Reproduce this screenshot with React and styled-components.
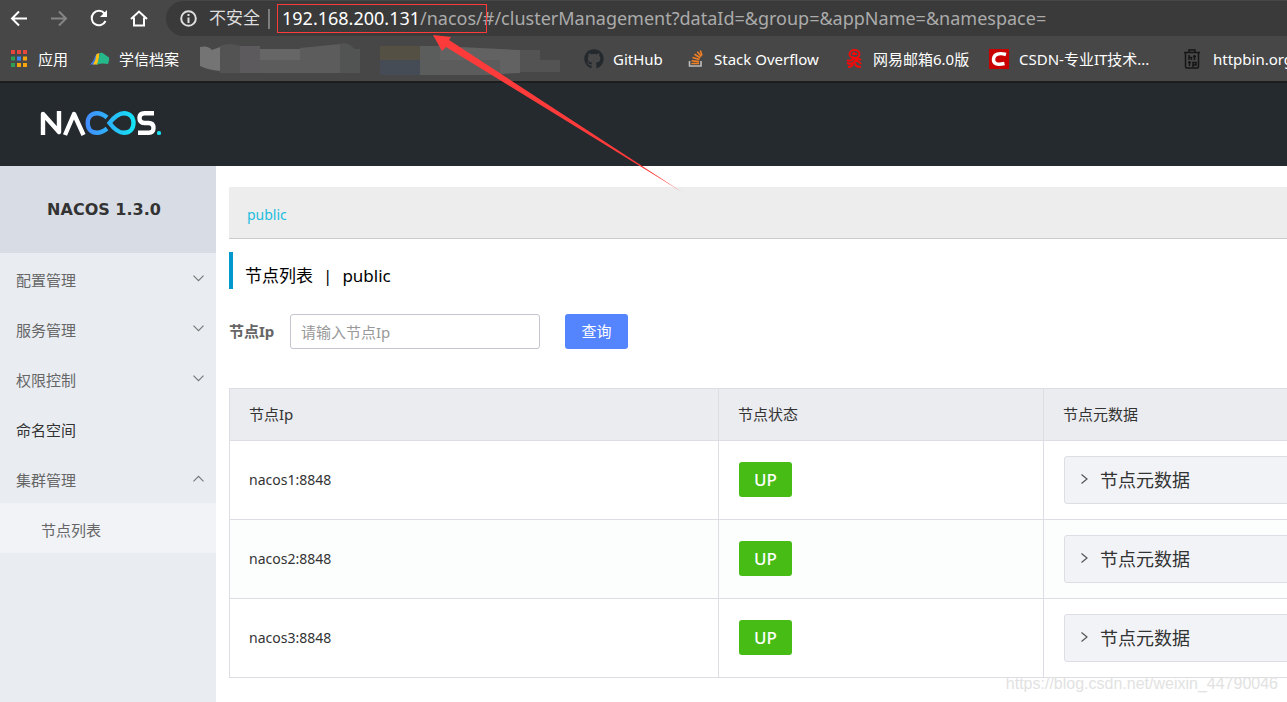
import React from 'react';
import styled, { createGlobalStyle } from 'styled-components';
import { FaGithub } from 'react-icons/fa';

const pageFont = '"Noto Sans", "Noto Sans CJK SC", sans-serif';

const GlobalStyle = createGlobalStyle`
  * { box-sizing: border-box; }
  html, body { margin: 0; overflow: hidden; }
  body { background: #fff; font-family: ${pageFont}; font-size: 14px; color: #333; }
  button, input { font: inherit; }
  a { color: inherit; text-decoration: none; }
`;

const Page = styled.div`
  display: flex;
  flex-direction: column;
  min-height: 100vh;
  position: relative;
`;

const BrowserChrome = styled.header`
  background: #474747;
  border-bottom: 2px solid #1d1d1d;
  overflow: hidden;
`;

const AddressRow = styled.div`
  display: flex;
  align-items: center;
  height: 36px;
  padding-left: 9px;
`;

const NavButton = styled.button`
  display: flex;
  align-items: center;
  width: ${(p) => (p.$last ? 37 : 40)}px;
  height: 36px;
  padding: 0;
  border: 0;
  background: none;
  color: ${(p) => (p.$dim ? '#858585' : '#fff')};
  svg { flex: none; }
`;

const AddressBar = styled.div`
  display: flex;
  align-items: center;
  flex: 1;
  align-self: stretch;
  margin-top: 1px;
  padding-left: 14px;
  border-radius: 18px 0 0 18px;
  background: #3a3a3a;
  color: #ababab;
  font-size: 18px;
  line-height: 28px;
  white-space: nowrap;
`;

const Insecure = styled.span`
  margin-left: 12px;
  padding-bottom: 2px;
  color: #dedede;
  font-size: 17px;
`;

const Divider = styled.span`
  width: 2px;
  height: 20px;
  margin: 0 7px 0 8px;
  background: #7d7d7d;
`;

const MarkedUrl = styled.span`
  position: relative;
  height: 29px;
  padding-left: 5px;
  &::after {
    content: '';
    position: absolute;
    inset: 0 -4px 0 0;
    border: 1px solid #fe3b3b;
  }
  b { font-weight: 400; color: #fff; }
`;

const UrlRest = styled.span`
  height: 29px;
`;

const BookmarkRow = styled.nav`
  display: flex;
  align-items: center;
  height: 45px;
  padding-left: 10px;
  color: #fff;
  font-size: 15px;
  white-space: nowrap;
`;

const Bookmark = styled.a`
  display: flex;
  align-items: center;
  gap: ${(p) => p.$gap || 10}px;
  flex: none;
  width: ${(p) => p.$width}px;
  svg { flex: none; }
`;

const Redacted = styled.svg`
  flex: none;
  margin-right: 24px;
`;

const Banner = styled.div`
  display: flex;
  align-items: center;
  height: 83px;
  padding: 0 0 4px 40px;
  background: #252a2f;
`;

const Body = styled.div`
  display: flex;
  flex: 1;
`;

const Sidebar = styled.aside`
  flex: none;
  width: 216px;
  background: #e9edf2;
`;

const Version = styled.h1`
  margin: 0;
  height: 87px;
  padding-right: 8px;
  background: #d8dce4;
  font-family: "DejaVu Sans", sans-serif;
  font-size: 16px;
  line-height: 87px;
  text-align: center;
`;

const MenuItem = styled.a`
  display: flex;
  align-items: center;
  justify-content: space-between;
  height: 50px;
  padding: 2px 12px 0 ${(p) => (p.$child ? 41 : 16)}px;
  background: ${(p) => (p.$child ? '#f1f3f7' : 'none')};
  color: ${(p) => (p.$leaf ? '#333' : '#666')};
  font-size: 15px;
  svg { margin-bottom: 2px; }
`;

const Main = styled.main`
  flex: 1;
  min-width: 0;
  padding: 21px 0 0 13px;
  overflow: hidden;
`;

const Namespace = styled.div`
  height: 52px;
  padding: 4px 18px 0;
  border-bottom: 1px solid #ccc;
  background: #ededed;
  color: #1cbede;
  font-size: 14px;
  line-height: 48px;
`;

const Title = styled.h2`
  display: flex;
  gap: 10px;
  height: 37px;
  margin: 13px 0 25px;
  padding: 5px 0 0 12px;
  border-left: 4px solid #09c;
  color: #000;
  font-size: 17px;
  font-weight: 400;
  line-height: 37px;
`;

const SearchForm = styled.form`
  display: flex;
  align-items: center;
  height: 35px;
  margin-bottom: 39px;
  font-size: 15px;
  label { width: 61px; padding-bottom: 2px; color: #666; font-weight: 700; }
`;

const IpInput = styled.input`
  width: 250px;
  height: 35px;
  padding: 0 10px;
  border: 1px solid #c4c6cf;
  border-radius: 3px;
  outline: 0;
  &::placeholder { color: #999; opacity: 1; }
`;

const SearchButton = styled.button`
  width: 63px;
  height: 35px;
  margin-left: 25px;
  padding: 0 0 2px;
  border: 0;
  border-radius: 3px;
  background: #5584ff;
  color: #fff;
`;

const NodeTable = styled.table`
  width: 120%;
  table-layout: fixed;
  border-collapse: collapse;
  font-size: 15px;
  th, td { padding: 0 20px 2px 19px; border: 1px solid #dcdee3; text-align: left; }
  th { height: 52px; background: #ebecf0; font-weight: 400; }
  td { height: 79px; }
  td:first-child { font-size: 14px; }
  td + td { padding-left: 20px; }
  td:last-child { padding-bottom: 0; }
  tbody tr:nth-child(even) { background: #fcfefd; }
`;

const Status = styled.span`
  display: inline-block;
  height: 35px;
  padding: 0 15px;
  border-radius: 3px;
  background: #46bc15;
  color: #fff;
  font-size: 17px;
  font-weight: 500;
  line-height: 35px;
  vertical-align: middle;
`;

const Metadata = styled.button`
  display: flex;
  align-items: center;
  gap: 12px;
  width: 100%;
  height: 48px;
  padding: 0 16px 2px;
  border: 1px solid #dcdee3;
  border-radius: 3px;
  background: #f2f3f7;
  color: #333;
  font-size: 18px;
`;

const Arrow = styled.svg`
  position: absolute;
  left: 433px;
  top: 34px;
  pointer-events: none;
`;

const Watermark = styled.span`
  position: absolute;
  right: 9px;
  bottom: 8px;
  color: #e2e2e2;
  font-family: "Liberation Sans", sans-serif;
  font-size: 16px;
  line-height: 20px;
`;

const Chevron = ({ d, w = 11, h = 7, color = '#777' }) => (
  <svg width={w} height={h} viewBox={`0 0 ${w} ${h}`} fill="none" stroke={color} strokeWidth="1.2"><path d={d} /></svg>
);
const Down = () => <Chevron d="M.5 .7 5.500 5.700 10.500 .7" />;
const Up = () => <Chevron d="M.5 6.300 5.500 1.300 10.500 6.300" />;
const Right = () => <Chevron w={7} h={10} color="#555" d="M.5 .5 6 5 .5 9.500" />;

const AppsIcon = () => {
  const colors = ['#e8453c', '#e8453c', '#e8453c', '#2f9e54', '#3b86f7', '#f5a60a', '#2f9e54', '#f5a60a', '#f5a60a'];
  return (
    <svg width="18" height="18" viewBox="0 0 18 18">
      {colors.map((c, i) => <rect key={i} x={1 + (i % 3) * 6} y={Math.floor(i / 3) * 6.5} width="4" height="4" fill={c} />)}
    </svg>
  );
};

const ArchiveIcon = () => (
  <svg width="20" height="14" viewBox="0 0 20 14">
    <path d="M0 12.500Q4 9 5 4L7.500 2 5 12.500Z" fill="#3e7be8" />
    <path d="M3 12.500Q6 8 6.500 2L9.500 1 8 12.500Z" fill="#fcc014" />
    <path d="M6.500 12.500Q9.500 8 9.500 1Q12 0 14 2L19 5.500Q19.800 8 18 12Q12 11 6.500 12.500Z" fill="#26b88a" />
  </svg>
);

const StackIcon = () => (
  <svg width="16" height="18" viewBox="0 0 16 18" fill="none" strokeWidth="1.600">
    <path d="M1.500 11V16H13V11" stroke="#bcbcbc" />
    <path d="M3.500 13.500H11M3.600 10.700 11 11.600M4.500 7.500 11.500 9.500M6.500 4.300 12.200 7.800M9.300 1.800 13.300 6.600M12.300 .5 14 5.500" stroke="#f48024" />
  </svg>
);

const NeteaseIcon = () => (
  <svg width="17" height="20" viewBox="0 0 17 20" fill="none" stroke="#f40a0a" strokeWidth="2">
    <ellipse cx="8.500" cy="5" rx="5" ry="4" />
    <path d="M6 5h5M8 3v3M1 11q3 2 6-1t8 1M1 14q4 2 7-1t7 2M2 18q4 0 5-3M9 14q0 4 6 4M6 8l6 3" />
  </svg>
);

const CsdnIcon = () => (
  <svg width="20" height="20" viewBox="0 0 20 20">
    <path d="M0 0H20V20H0Z" fill="#c90000" />
    <path d="M17 5.500C10 3.500 5 5 4.500 10C4 15.500 9 16 15.500 14.500" fill="none" stroke="#fff" strokeWidth="3.400" />
  </svg>
);

const HttpbinIcon = () => (
  <svg width="18" height="20" viewBox="0 0 18 20" fill="none" stroke="#161616" strokeWidth="1.500">
    <path d="M1 3.500H17M6 3V1H12V3M2.500 4V17.500Q2.500 19 4 19H14Q15.500 19 15.500 17.500V4" />
    <path d="M6 6v5M6 8.500h2.500V11M11.500 6v5M10 7.500h3M6.500 12v5M5 13.500h3M10 18v-4.500h3V16h-3" />
  </svg>
);

const NacosLogo = () => (
  <svg width="122" height="26" viewBox="0 0 122 26" fill="none" role="img" aria-label="NACOS">
    <defs>
      <linearGradient id="loop" gradientUnits="userSpaceOnUse" x1="46" y1="0" x2="95" y2="0">
        <stop offset="0" stopColor="#438bff" /><stop offset="1" stopColor="#13e4f4" />
      </linearGradient>
    </defs>
    <path d="M3 25V4L19 22V1M25 25 34 4 43.500 25" stroke="#fff" strokeWidth="4.400" strokeLinejoin="round" />
    <path d="M67 7.500Q62 3.200 57 3.200C51 3.200 47.700 7.500 47.700 13S51 22.800 57 22.800Q62 22.800 67 18.500M69.500 13Q77 3.200 84 3.200C90 3.200 93.500 7.500 93.500 13S90 22.800 84 22.800Q77 22.800 69.500 13Z" stroke="url(#loop)" strokeWidth="4.400" />
    <path d="M114 3.200H104.500Q99.500 3.200 99.500 8T104.500 13H108.500Q113.500 13 113.500 18T108.500 22.800H98" stroke="#fff" strokeWidth="4.400" />
    <rect x="117" y="21" width="4" height="4" rx="1.500" fill="#15dff1" />
  </svg>
);

const nodes = ['nacos1:8848', 'nacos2:8848', 'nacos3:8848'];
const menu = [
  { label: '配置管理', icon: <Down /> },
  { label: '服务管理', icon: <Down /> },
  { label: '权限控制', icon: <Down /> },
  { label: '命名空间', leaf: true },
  { label: '集群管理', icon: <Up /> },
  { label: '节点列表', child: true },
];

export default function App() {
  return (
    <Page>
      <GlobalStyle />
      <BrowserChrome>
        <AddressRow>
          <NavButton aria-label="Back"><svg width="20" height="20" viewBox="0 0 20 20" fill="none" stroke="currentColor" strokeWidth="2"><path d="M18 10.500H3M10 3.500 3 10.500 10 17.500" /></svg></NavButton>
          <NavButton aria-label="Forward" $dim><svg width="20" height="20" viewBox="0 0 20 20" fill="none" stroke="currentColor" strokeWidth="2"><path d="M2 10.500H17M10 3.500 17 10.500 10 17.500" /></svg></NavButton>
          <NavButton aria-label="Reload"><svg width="20" height="20" viewBox="0 0 20 20" fill="none" stroke="currentColor" strokeWidth="2"><path d="M16.500 13A7.200 7.200 0 1 1 15.500 5.500" /><path d="M18 2V9H11Z" fill="currentColor" stroke="none" /></svg></NavButton>
          <NavButton aria-label="Home" $last><svg width="20" height="20" viewBox="0 0 20 20" fill="none" stroke="currentColor" strokeWidth="2"><path d="M2 11 10 3.500 18 11M5 9.500V17.500H15V9.500" /></svg></NavButton>
          <AddressBar>
            <svg width="17" height="17" viewBox="0 0 17 17" fill="none" stroke="#dedede" strokeWidth="2"><circle cx="8.500" cy="8.500" r="7.300" /><path d="M8.500 7.500V13M8.500 4V6" /></svg>
            <Insecure>不安全</Insecure>
            <Divider />
            <MarkedUrl><b>192.168.200.131</b>/nacos/</MarkedUrl>
            <UrlRest>#/clusterManagement?dataId=&amp;group=&amp;appName=&amp;namespace=</UrlRest>
          </AddressBar>
        </AddressRow>
        <BookmarkRow>
          <Bookmark href="#" $width={80}><AppsIcon />应用</Bookmark>
          <Bookmark href="#" $width={110} $gap={9}><ArchiveIcon />学信档案</Bookmark>
          <Redacted width="360" height="34" viewBox="0 0 360 34">
            <path d="M0 5Q8 3 12 8L20 5V29Q8 28 0 24Z" fill="#747474" />
            <path d="M20 4Q30 0 40 4H60V31H20Z" fill="#535353" />
            <path d="M40 4H60V31H40Z" fill="#5c5a5c" />
            <path d="M60 7H100V18H60Z" fill="#666" />
            <path d="M100 6L140 2Q148 0 154 7H160V31H60V18H100Z" fill="#5c5c5c" />
            <path d="M140 2Q148 0 154 7H160V31H140Z" fill="#525353" />
            <path d="M180 4H220V18H180Z" fill="#555044" />
            <path d="M180 18H220V33H180Z" fill="#454c55" />
            <path d="M220 4H240V33H220Z" fill="#5b5d5d" />
            <path d="M240 4 320 8V31L280 33H240Z" fill="#626262" />
            <path d="M240 18H300V33H240Z" fill="#5c5c5c" />
            <path d="M320 8H340V18H360V30H320Z" fill="#535353" />
          </Redacted>
          <Bookmark href="#" $width={104} $gap={9}><FaGithub size={20} color="#24292e" />GitHub</Bookmark>
          <Bookmark href="#" $width={158}><StackIcon />Stack Overflow</Bookmark>
          <Bookmark href="#" $width={143}><NeteaseIcon />网易邮箱6.0版</Bookmark>
          <Bookmark href="#" $width={194}><CsdnIcon />CSDN-专业IT技术...</Bookmark>
          <Bookmark href="#" $width={120} $gap={12}><HttpbinIcon />httpbin.org</Bookmark>
        </BookmarkRow>
      </BrowserChrome>
      <Banner><NacosLogo /></Banner>
      <Body>
        <Sidebar>
          <Version>NACOS 1.3.0</Version>
          <nav>
            {menu.map((m) => (
              <MenuItem key={m.label} href="#" $leaf={m.leaf} $child={m.child}>{m.label}{m.icon}</MenuItem>
            ))}
          </nav>
        </Sidebar>
        <Main>
          <Namespace><a href="#">public</a></Namespace>
          <Title><span>节点列表</span><span>|</span><span>public</span></Title>
          <SearchForm onSubmit={(e) => e.preventDefault()}>
            <label htmlFor="ip">节点Ip</label>
            <IpInput id="ip" placeholder="请输入节点Ip" />
            <SearchButton>查询</SearchButton>
          </SearchForm>
          <NodeTable>
            <colgroup><col style={{ width: 489 }} /><col style={{ width: 325 }} /><col /></colgroup>
            <thead><tr><th>节点Ip</th><th>节点状态</th><th>节点元数据</th></tr></thead>
            <tbody>
              {nodes.map((n) => (
                <tr key={n}>
                  <td>{n}</td>
                  <td><Status>UP</Status></td>
                  <td><Metadata><Right />节点元数据</Metadata></td>
                </tr>
              ))}
            </tbody>
          </NodeTable>
        </Main>
      </Body>
      <Arrow width="250" height="160" viewBox="0 0 250 160"><path d="M0 1 18 3 16 6 249 158 13 13 9 17Z" fill="#fe3b3b" /></Arrow>
      <Watermark>https://blog.csdn.net/weixin_44790046</Watermark>
    </Page>
  );
}
